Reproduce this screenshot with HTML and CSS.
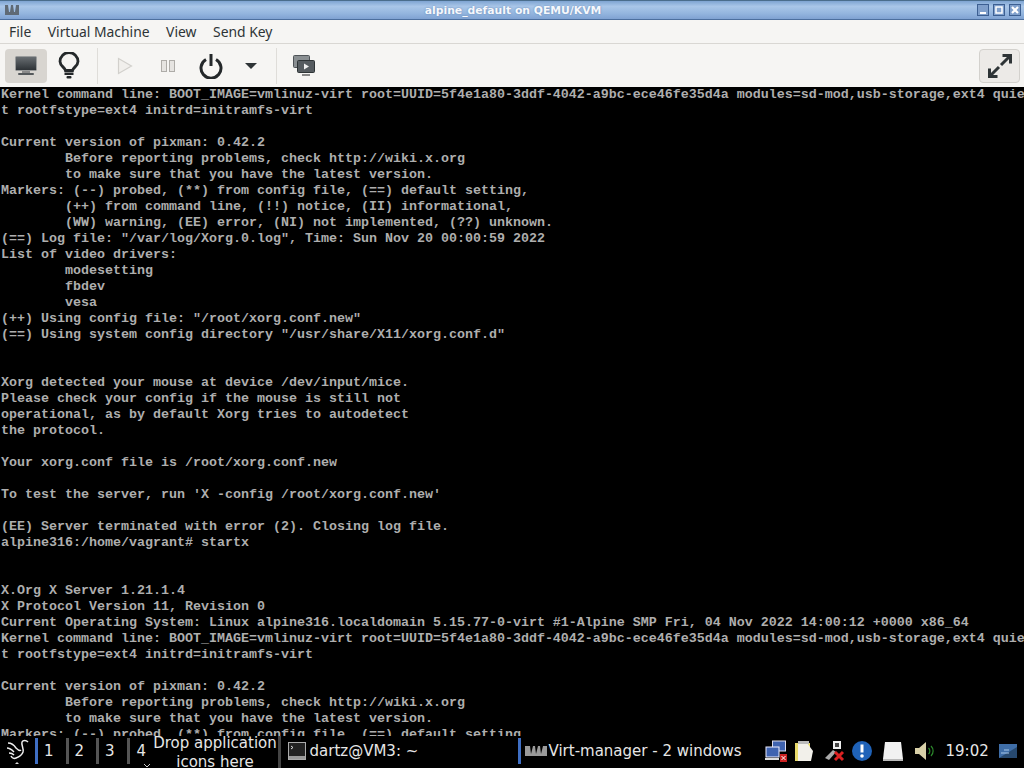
FILE: index.html
```html
<!DOCTYPE html>
<html lang="en">
<head>
<meta charset="utf-8">
<title>alpine_default on QEMU/KVM</title>
<link rel="stylesheet" href="styles.css">
</head>
<body>
<div class="screen">
  <header class="titlebar">
    <svg class="app-icon" width="14" height="10" viewBox="0 0 14 10"><path d="M0 0h3l1 7h1l1-7h2l1 7h1l1-7h3v10H0z" fill="#5f6a75"/></svg>
    <div class="title">alpine_default on QEMU/KVM</div>
    <div class="wm-buttons">
      <span class="wm-btn"><svg width="10" height="10" viewBox="0 0 10 10"><rect x="2" y="7" width="6" height="2" fill="#fff"/></svg></span>
      <span class="wm-btn"><svg width="10" height="10" viewBox="0 0 10 10"><rect x="2" y="2" width="6" height="6" fill="none" stroke="#fff" stroke-width="1.500"/></svg></span>
      <span class="wm-btn"><svg width="10" height="10" viewBox="0 0 10 10"><path d="M2 2l6 6M8 2L2 8" stroke="#fff" stroke-width="2.200"/></svg></span>
    </div>
  </header>
  <nav class="menubar">
    <span>File</span><span>Virtual Machine</span><span>View</span><span>Send Key</span>
  </nav>
  <div class="toolbar">
    <div class="tool active">
      <svg width="24" height="20" viewBox="0 0 24 20"><defs><linearGradient id="scr" x1="0" y1="0" x2="0" y2="1"><stop offset="0" stop-color="#6a7074"/><stop offset="1" stop-color="#2c3034"/></linearGradient></defs><rect x="1.500" y="0.500" width="21" height="14" rx="1" fill="url(#scr)" stroke="#9a9c9c"/><rect x="8" y="15" width="8" height="2" fill="#8a8a8a"/><rect x="4" y="17" width="16" height="2" rx="1" fill="#55595c"/></svg>
    </div>
    <div class="tool">
      <svg width="22" height="28" viewBox="0 0 22 28"><path d="M7.500 18.500C7 15.500 2 14 2 9.500a9 9 0 0 1 18 0c0 4.500-5 6-5.500 9z" fill="#f4f3f1" stroke="#24282a" stroke-width="2.800"/><rect x="6.500" y="20.500" width="9" height="2.500" fill="#24282a"/><rect x="8.500" y="24" width="5" height="2.500" rx="1" fill="#24282a"/></svg>
    </div>
    <i class="sep"></i>
    <div class="tool">
      <svg width="18" height="18" viewBox="0 0 18 18"><path d="M2.500 1.500l13 7.500-13 7.500z" fill="#f1efec" stroke="#d2d0cc" stroke-width="1.200"/></svg>
    </div>
    <div class="tool">
      <svg width="16" height="14" viewBox="0 0 16 14"><rect x="1.500" y="1.500" width="5" height="11" fill="#e6e4e1" stroke="#aeaca8"/><rect x="9.500" y="1.500" width="5" height="11" fill="#e6e4e1" stroke="#aeaca8"/></svg>
    </div>
    <div class="tool">
      <svg width="24" height="26" viewBox="0 0 24 26"><path d="M7 6.500a10 10 0 1 0 10 0" fill="none" stroke="#24282a" stroke-width="3"/><path d="M12 1v12" stroke="#24282a" stroke-width="3"/></svg>
    </div>
    <div class="tool caret">
      <svg width="14" height="8" viewBox="0 0 14 8"><path d="M1 1h12L7 7z" fill="#2e3436"/></svg>
    </div>
    <i class="sep"></i>
    <div class="tool">
      <svg width="22" height="22" viewBox="0 0 22 22"><rect x="0.500" y="0.500" width="16" height="12" rx="1" fill="#8a8f92" stroke="#4f5458"/><rect x="4.500" y="5.500" width="17" height="12" rx="1" fill="#565c60" stroke="#2e3436"/><path d="M11 8.500l5 3-5 3z" fill="#f0f0f0"/><rect x="9" y="19" width="8" height="2" fill="#888"/></svg>
    </div>
    <div class="spring"></div>
    <div class="tool fullscreen">
      <svg width="26" height="26" viewBox="0 0 26 26"><path d="M14 12l9-9M15.500 2.500h8v8M12 14l-9 9M2.500 15.500v8h8" fill="none" stroke="#2e3436" stroke-width="3"/></svg>
    </div>
  </div>
  <pre class="console">Kernel command line: BOOT_IMAGE=vmlinuz-virt root=UUID=5f4e1a80-3ddf-4042-a9bc-ece46fe35d4a modules=sd-mod,usb-storage,ext4 quie
t rootfstype=ext4 initrd=initramfs-virt

Current version of pixman: 0.42.2
        Before reporting problems, check http://wiki.x.org
        to make sure that you have the latest version.
Markers: (--) probed, (**) from config file, (==) default setting,
        (++) from command line, (!!) notice, (II) informational,
        (WW) warning, (EE) error, (NI) not implemented, (??) unknown.
(==) Log file: "/var/log/Xorg.0.log", Time: Sun Nov 20 00:00:59 2022
List of video drivers:
        modesetting
        fbdev
        vesa
(++) Using config file: "/root/xorg.conf.new"
(==) Using system config directory "/usr/share/X11/xorg.conf.d"


Xorg detected your mouse at device /dev/input/mice.
Please check your config if the mouse is still not
operational, as by default Xorg tries to autodetect
the protocol.

Your xorg.conf file is /root/xorg.conf.new

To test the server, run 'X -config /root/xorg.conf.new'

(EE) Server terminated with error (2). Closing log file.
alpine316:/home/vagrant# startx


X.Org X Server 1.21.1.4
X Protocol Version 11, Revision 0
Current Operating System: Linux alpine316.localdomain 5.15.77-0-virt #1-Alpine SMP Fri, 04 Nov 2022 14:00:12 +0000 x86_64
Kernel command line: BOOT_IMAGE=vmlinuz-virt root=UUID=5f4e1a80-3ddf-4042-a9bc-ece46fe35d4a modules=sd-mod,usb-storage,ext4 quie
t rootfstype=ext4 initrd=initramfs-virt

Current version of pixman: 0.42.2
        Before reporting problems, check http://wiki.x.org
        to make sure that you have the latest version.
Markers: (--) probed, (**) from config file, (==) default setting,</pre>
  <footer class="panel">
    <svg class="menu-icon" width="24" height="26" viewBox="0 0 24 26"><path d="M23 4c-2-2-5-2-6 0-1 3 2 6 1 10-1 3-4 5-7 6M3 5c3 0 6 2 8 5 2 2 4 3 5 2M2 10c3 0 5 2 7 4M4 15c2 0 4 1 5 2M11 20c-2 1-4 0-5-2" fill="none" stroke="#eee" stroke-width="1.500"/><path d="M10 26h4l-2-2z" fill="#ddd"/></svg>
    <div class="pager">
      <span class="desk current">1</span>
      <span class="desk">2</span>
      <span class="desk">3</span>
      <span class="desk">4<svg class="more" width="8" height="4" viewBox="0 0 8 4"><path d="M1 0l3 3 3-3" fill="none" stroke="#ccc"/></svg></span>
    </div>
    <div class="drop">Drop application icons here</div>
    <div class="task term">
      <svg width="18" height="18" viewBox="0 0 18 18"><rect x="0.500" y="0.500" width="17" height="17" fill="#222" stroke="#aaa"/><rect x="1" y="14" width="16" height="3" fill="#999"/><path d="M3 4l2 1.500-2 1.500" fill="none" stroke="#ddd"/></svg>
      <span>dartz@VM3: ~</span>
    </div>
    <div class="task virt">
      <svg width="22" height="10" viewBox="0 0 22 10"><path d="M0 0h5l1 8 2-8h2l1 8 2-8h2l1 8 2-8h4v10H0z" fill="#9a9a9a"/></svg>
      <span>Virt-manager - 2 windows</span>
    </div>
    <div class="tray">
      <svg class="ti-net" width="22" height="22" viewBox="0 0 22 22"><rect x="7.500" y="1" width="13" height="10" fill="#3f63b0" stroke="#dde"/><rect x="1" y="7" width="13" height="10" fill="#3f63b0" stroke="#eef"/><rect x="0" y="18" width="14" height="2" fill="#ddd"/><rect x="15" y="14" width="7" height="8" fill="#c22"/><path d="M16.500 16l4 4M20.500 16l-4 4" stroke="#fff"/></svg>
      <svg class="ti-clip" width="20" height="22" viewBox="0 0 20 22"><rect x="1" y="3" width="15" height="18" fill="#e8d96a"/><path d="M4 3h9l6 8-2 10H4z" fill="#f2f0ea"/><rect x="4" y="1" width="11" height="3" fill="#bbb"/></svg>
      <svg class="ti-plug" width="20" height="22" viewBox="0 0 20 22"><rect x="8" y="1" width="8" height="8" fill="#eee"/><rect x="10" y="3" width="4" height="4" fill="#444"/><path d="M0 18l8-8 3 2-7 8z" fill="#aaa"/><path d="M10 12l8 8M18 12l-8 8" stroke="#d22" stroke-width="3"/></svg>
      <svg class="ti-info" width="20" height="20" viewBox="0 0 20 20"><circle cx="10" cy="10" r="10" fill="#1f62b8"/><path d="M10 3.500v8" stroke="#fff" stroke-width="3"/><circle cx="10" cy="15" r="1.800" fill="#fff"/></svg>
      <svg class="ti-drive" width="20" height="20" viewBox="0 0 20 20"><path d="M2 1h16l2 17H0z" fill="#f2f2f2"/><rect x="0" y="18" width="20" height="2" fill="#bbb"/></svg>
      <svg class="ti-vol" width="20" height="20" viewBox="0 0 20 20"><path d="M0 7h4l7-6v18l-7-6H0z" fill="#d8d0a8"/><path d="M13.500 7a4 4 0 0 1 0 6M16 5a7 7 0 0 1 0 10" fill="none" stroke="#2c8a2c" stroke-width="1.200"/></svg>
      <span class="clock">19:02</span>
      <svg class="ti-desk" width="18" height="14" viewBox="0 0 18 14"><rect width="18" height="14" fill="#3f6ea8"/><path d="M0 14L18 3v11z" fill="#27496f"/><path d="M2 9h8M5 6h5" stroke="#a9c8e8"/></svg>
    </div>
  </footer>
</div>
</body>
</html>
```
FILE: styles.css
```css
html, body { margin: 0; height: 100%; background: #000; overflow: hidden; }
.screen { width: 1024px; height: 768px; display: flex; flex-direction: column; overflow: hidden; font-family: "DejaVu Sans", sans-serif; }

.titlebar { height: 20px; flex: none; display: grid; grid-template-columns: 1fr auto 1fr; align-items: center; box-sizing: border-box; padding: 0 3px 0 5px; background: linear-gradient(#7ea4d2, #a9c6e8 30%, #93b5de 70%, #7fa2d2); border-top: 1px solid #4a6d8c; border-bottom: 1px solid #4c6f9e; }
.title { text-align: center; color: #f6f8fc; font: bold 10.800px "DejaVu Sans", sans-serif; text-shadow: 0 0 2px #5f82b0; }
.wm-buttons { display: flex; gap: 4px; justify-self: end; }
.wm-btn { width: 12px; height: 12px; box-sizing: border-box; display: flex; align-items: center; justify-content: center; border: 1px solid #3c5f92; background: #7f9fcb; }

.menubar { height: 24px; flex: none; display: flex; align-items: center; gap: 16.500px; box-sizing: border-box; padding-left: 9px; background: #f6f5f3; border-bottom: 1px solid #d9d7d3; font: 13.900px "Noto Sans", sans-serif; color: #2e3436; }

.toolbar { height: 43px; flex: none; display: flex; align-items: center; gap: 1px; box-sizing: border-box; padding: 0 4px 0 5px; background: #f6f5f3; }
.tool { display: flex; align-items: center; justify-content: center; width: 42px; height: 34px; flex: none; }
.tool.active { background: #d8d5d0; border-radius: 4px; }
.tool.caret { width: 36px; }
.sep { width: 1px; height: 36px; background: #dfddd9; margin: 0 5px 0 6px; flex: none; }
.spring { flex: 1; }
.tool.fullscreen { background: #eceae7; border: 1px solid #d3d1cd; border-radius: 4px; box-sizing: border-box; width: 41px; }

.console { flex: 1; min-height: 0; margin: 0; padding: 0 0 0 1px; overflow: hidden; background: #000; color: #aeaeae; font: bold 13.330px/16px "Liberation Mono", monospace; white-space: pre; }

.panel { height: 32px; flex: none; display: flex; align-items: center; box-sizing: border-box; padding-bottom: 2px; background: #000; color: #e6e6e6; font: 15px "DejaVu Sans", sans-serif; overflow: hidden; position: relative; }
.menu-icon { margin: 0 6px 0 5px; flex: none; }
.pager { display: flex; flex: none; }
.desk { width: 30.500px; height: 26px; line-height: 26px; box-sizing: border-box; border-left: 3px solid #555; padding-left: 6px; }
.desk:last-child { width: 26px; padding-left: 7px; }
.desk.current { border-left-color: #3f6fc4; }
.more { position: absolute; left: 143px; bottom: 0; }
.drop { width: 128px; height: 36px; flex: none; align-self: flex-start; margin-top: -2px; text-align: center; line-height: 19px; box-sizing: border-box; border-right: 3px solid #444; margin-right: 7px; }
.task { display: flex; align-items: center; flex: none; white-space: nowrap; }
.task.term { width: 230px; gap: 4px; }
.task.virt { width: 247px; height: 26px; box-sizing: border-box; border-left: 3px solid #3f6fc4; padding-left: 4px; gap: 2px; }
.tray { display: flex; align-items: center; flex: none; }
.ti-clip { margin-left: 7px; }
.ti-plug { margin-left: 11px; }
.ti-info { margin-left: 7px; }
.ti-drive { margin-left: 11px; }
.ti-vol { margin-left: 12px; }
.clock { margin-left: 11px; }
.ti-desk { margin-left: 10px; }
```
